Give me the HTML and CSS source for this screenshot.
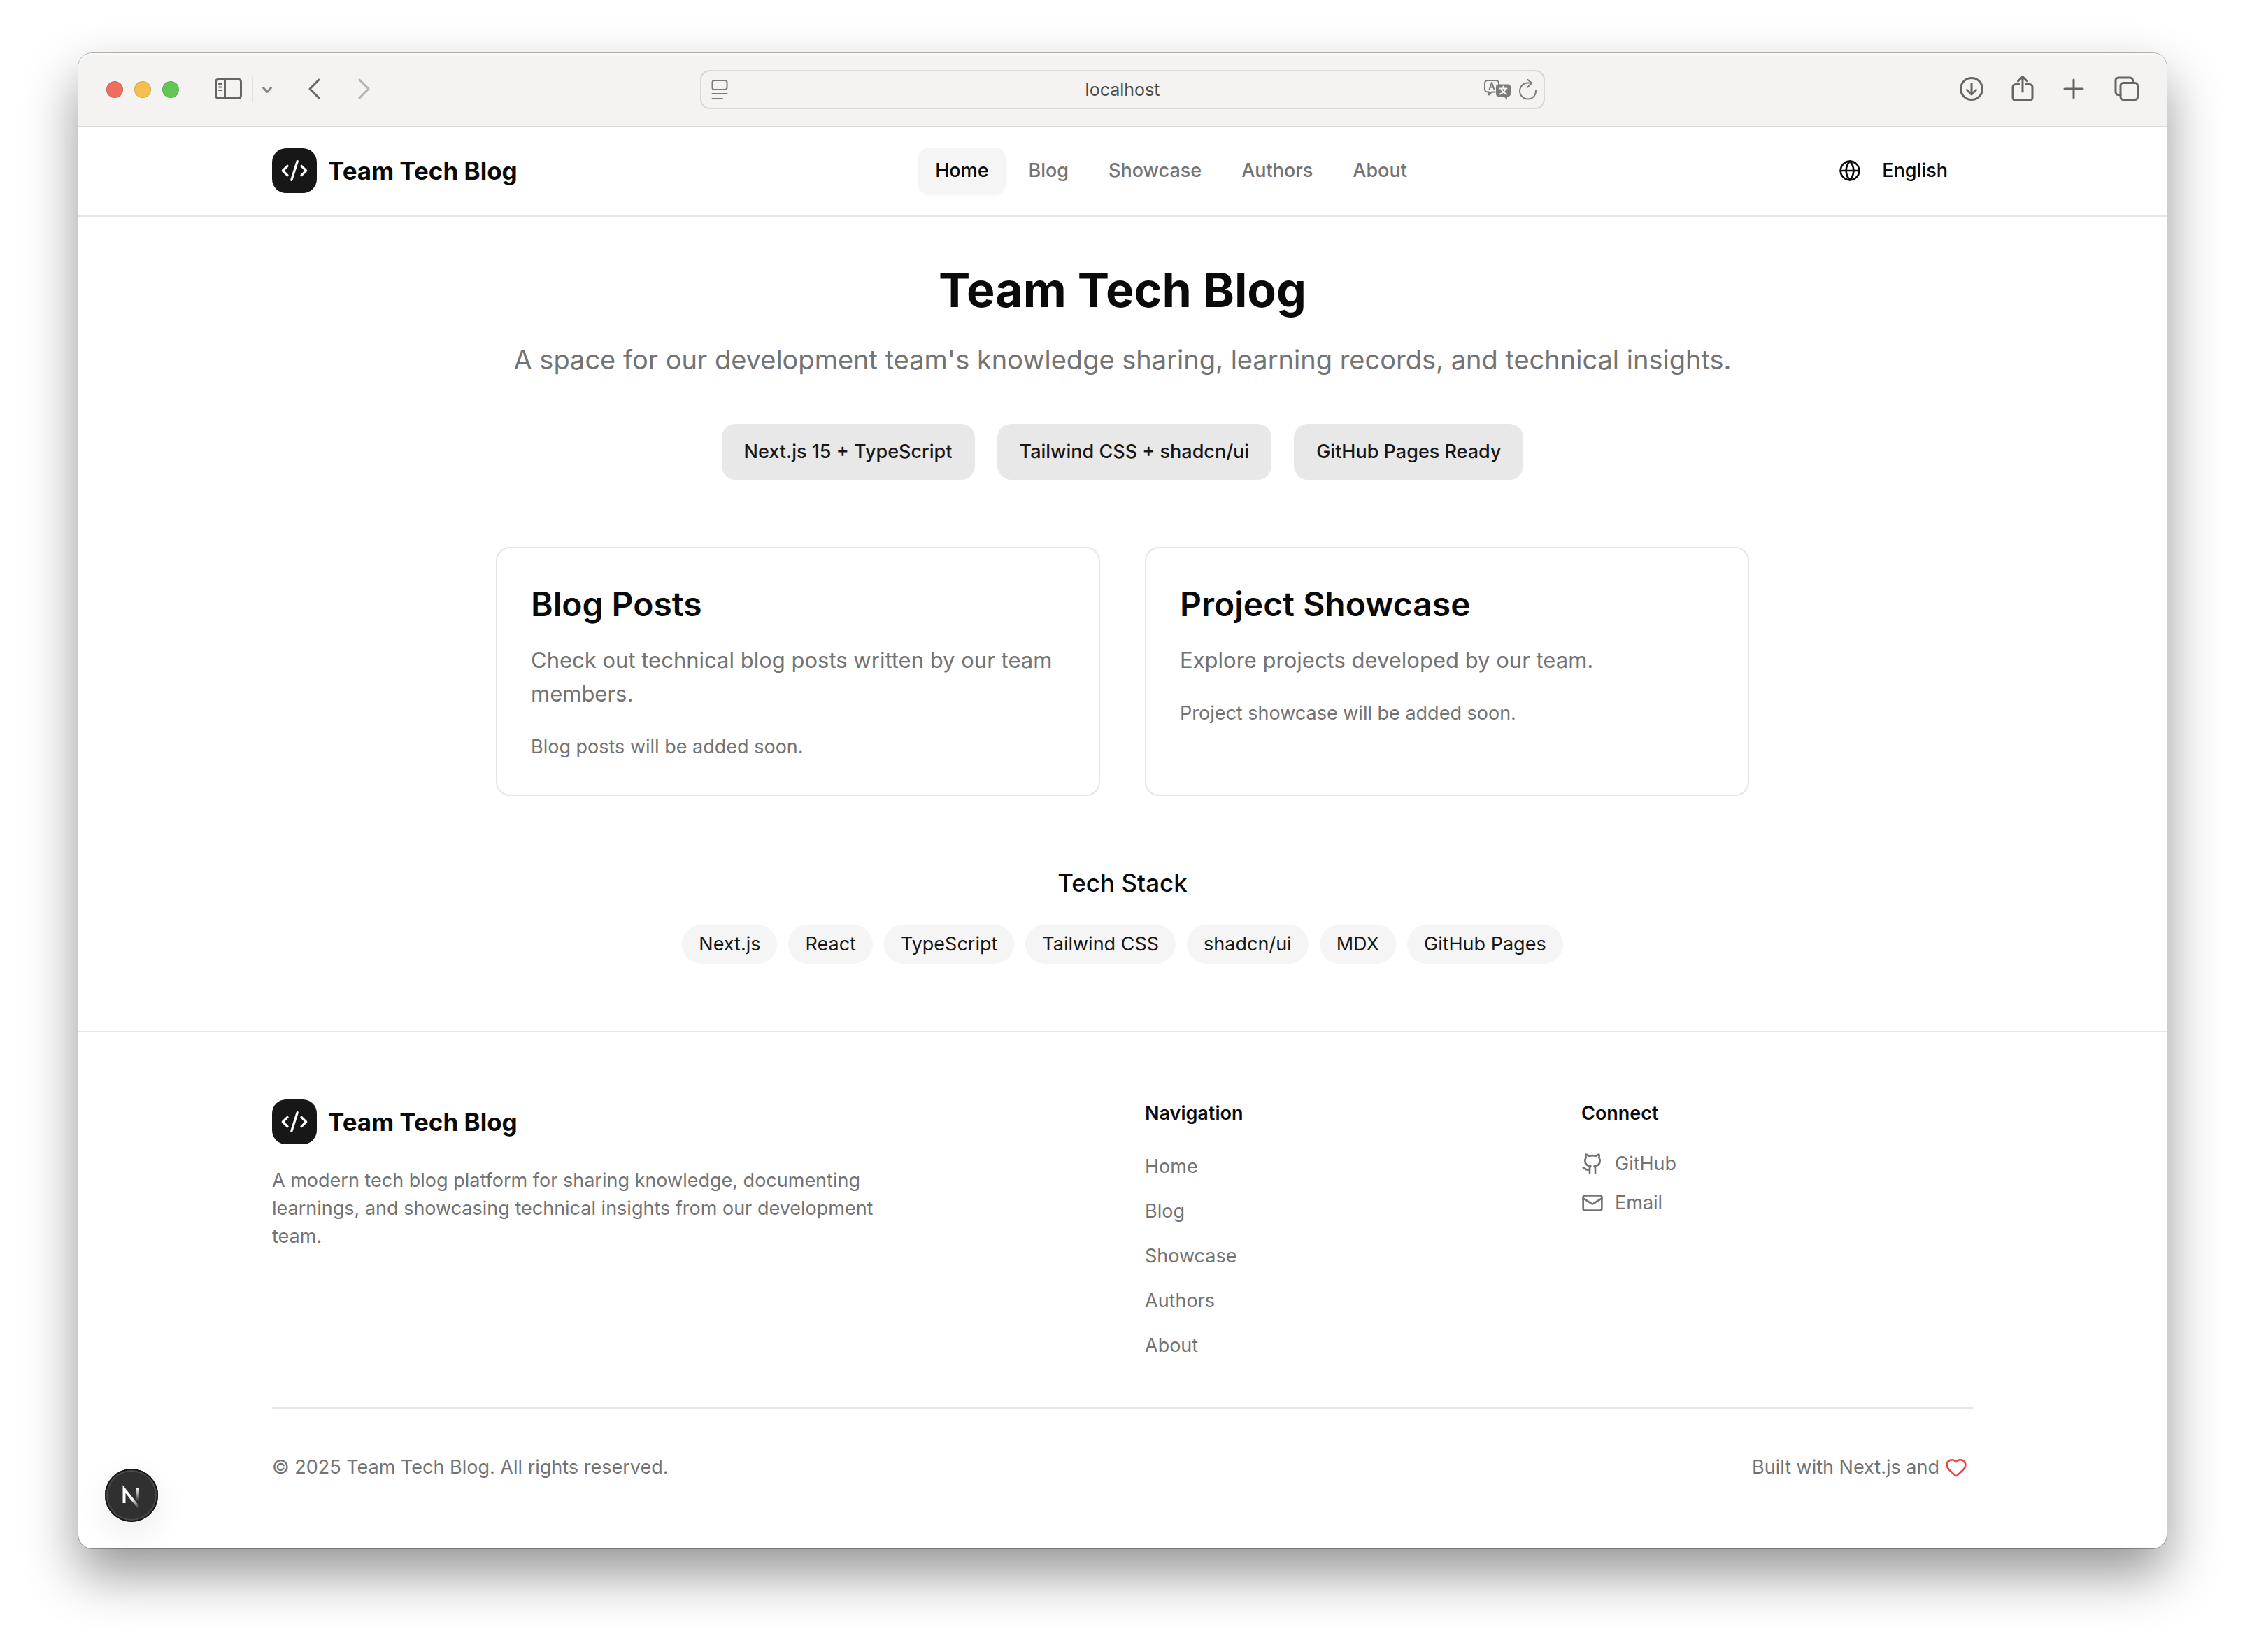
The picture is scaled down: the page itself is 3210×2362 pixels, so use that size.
FILE: index.html
```html
<!DOCTYPE html>
<html lang="en">
<head>
  <meta charset="utf-8">
  <meta name="viewport" content="width=device-width, initial-scale=1">
  <title>Team Tech Blog</title>
  <link rel="stylesheet" href="styles.css">
</head>
<body>
  <div class="window">
    <div class="toolbar">
      <div class="toolbar-left">
        <div class="lights">
          <span class="light light-close"></span>
          <span class="light light-minimize"></span>
          <span class="light light-zoom"></span>
        </div>
        <div class="sidebar-tools">
          <button class="tool" type="button" aria-label="Sidebar">
            <svg class="tool-icon" viewBox="0 0 40 40"><rect x="2.5" y="5" width="36" height="27.500" rx="4"/><path d="M15.500 5v27.500"/><path class="thin" d="M7 12h4M7 16.500h4M7 21h4"/></svg>
          </button>
          <span class="tool-divider"></span>
          <button class="tool tool-small" type="button" aria-label="Tab groups">
            <svg class="small-icon" viewBox="0 0 24 24"><path d="m6.500 9.500 5.500 6 5.500-6"/></svg>
          </button>
        </div>
        <div class="history">
          <button class="tool" type="button" aria-label="Back">
            <svg class="tool-icon" viewBox="0 0 40 40"><path d="M26 6 13 19l13 13"/></svg>
          </button>
          <button class="tool tool-disabled" type="button" aria-label="Forward">
            <svg class="tool-icon" viewBox="0 0 40 40"><path d="m14 6 13 13-13 13"/></svg>
          </button>
        </div>
      </div>
      <div class="address">
        <svg class="page-icon" viewBox="0 0 24 30"><rect x="1.500" y="2" width="21" height="13" rx="3"/><path d="M1.500 21h21M1.500 28H16"/></svg>
        <input class="address-input" type="text" value="localhost" aria-label="Address">
        <div class="address-tools">
          <button class="tool" type="button" aria-label="Translate">
            <svg class="translate-icon" viewBox="0 0 40 30">
              <path class="bubble-line" d="M17 18.500h-5l-4 4v-4H6a4 4 0 0 1-4-4V6a4 4 0 0 1 4-4h12a4 4 0 0 1 4 4v2"/>
              <path class="bubble-line" d="m8.500 15 3.500-10 3.500 10M9.800 11.500h4.500"/>
              <path class="bubble" d="M22 7.500h13a4 4 0 0 1 4 4V21a4 4 0 0 1-4 4h-1v4.500L29 25h-7a4 4 0 0 1-4-4v-9.500a4 4 0 0 1 4-4z"/>
              <path class="bubble-mark" d="M28.500 10.500v2.500M23.500 13.500h10M25.500 14c1 3.500 4 6 7.500 7.500M31.500 14c-1 3.500-4 6-7.500 7.500"/>
            </svg>
          </button>
          <button class="tool" type="button" aria-label="Reload">
            <svg class="reload-icon" viewBox="0 0 28 30"><path d="M25 16.500A11.500 11.500 0 1 1 13.500 5.500H19"/><path d="m13.500 1 5.500 4.500-5.500 6"/></svg>
          </button>
        </div>
      </div>
      <div class="toolbar-right">
        <button class="tool" type="button" aria-label="Downloads">
          <svg class="tool-icon" viewBox="0 0 40 40"><circle cx="20" cy="19" r="15.500"/><path d="M20 11.500v15M13.500 20.500l6.500 6.500 6.500-6.500"/></svg>
        </button>
        <button class="tool" type="button" aria-label="Share">
          <svg class="tool-icon" viewBox="0 0 40 40"><path d="M15 12.500H10a4 4 0 0 0-4 4V31.500a4 4 0 0 0 4 4h20a4 4 0 0 0 4-4V16.500a4 4 0 0 0-4-4h-5"/><path d="M20 23V2M13.500 8 20 1.500 26.500 8"/></svg>
        </button>
        <button class="tool" type="button" aria-label="New tab">
          <svg class="tool-icon" viewBox="0 0 40 40"><path d="M20 6v26M7 19h26"/></svg>
        </button>
        <button class="tool" type="button" aria-label="Tab overview">
          <svg class="tool-icon" viewBox="0 0 40 40"><rect x="14" y="10.500" width="24.500" height="24" rx="4"/><path d="M14 27.500H11a4 4 0 0 1-4-4V7a4 4 0 0 1 4-4h16.500a4 4 0 0 1 4 4v3.500"/></svg>
        </button>
      </div>
    </div>

    <header class="site-header">
      <div class="container header-row">
        <a class="brand" href="#">
          <span class="brand-mark">
            <svg class="brand-icon" viewBox="0 0 24 24"><path d="m18 16 4-4-4-4"/><path d="m6 8-4 4 4 4"/><path d="m14.500 4-5 16"/></svg>
          </span>
          <span class="brand-name">Team Tech Blog</span>
        </a>
        <nav class="main-nav" aria-label="Main">
          <a class="nav-link nav-link-active" href="#" aria-current="page">Home</a>
          <a class="nav-link" href="#">Blog</a>
          <a class="nav-link" href="#">Showcase</a>
          <a class="nav-link" href="#">Authors</a>
          <a class="nav-link" href="#">About</a>
        </nav>
        <button class="language" type="button">
          <svg class="icon" viewBox="0 0 24 24"><circle cx="12" cy="12" r="10"/><path d="M12 2a14.500 14.500 0 0 0 0 20 14.500 14.500 0 0 0 0-20"/><path d="M2 12h20"/></svg>
          <span>English</span>
        </button>
      </div>
    </header>

    <main class="main">
      <h1 class="title">Team Tech Blog</h1>
      <p class="subtitle">A space for our development team's knowledge sharing, learning records, and technical insights.</p>
      <div class="badges">
        <span class="badge">Next.js 15 + TypeScript</span>
        <span class="badge">Tailwind CSS + shadcn/ui</span>
        <span class="badge">GitHub Pages Ready</span>
      </div>
      <div class="cards">
        <section class="card">
          <h2 class="card-title">Blog Posts</h2>
          <p class="card-text">Check out technical blog posts written by our team members.</p>
          <p class="card-note">Blog posts will be added soon.</p>
        </section>
        <section class="card">
          <h2 class="card-title">Project Showcase</h2>
          <p class="card-text">Explore projects developed by our team.</p>
          <p class="card-note">Project showcase will be added soon.</p>
        </section>
      </div>
      <h3 class="stack-title">Tech Stack</h3>
      <ul class="stack">
        <li class="chip">Next.js</li>
        <li class="chip">React</li>
        <li class="chip">TypeScript</li>
        <li class="chip">Tailwind CSS</li>
        <li class="chip">shadcn/ui</li>
        <li class="chip">MDX</li>
        <li class="chip">GitHub Pages</li>
      </ul>
    </main>

    <footer class="site-footer">
      <div class="container">
        <div class="footer-grid">
          <div class="footer-about">
            <a class="brand" href="#">
              <span class="brand-mark">
                <svg class="brand-icon" viewBox="0 0 24 24"><path d="m18 16 4-4-4-4"/><path d="m6 8-4 4 4 4"/><path d="m14.500 4-5 16"/></svg>
              </span>
              <span class="brand-name">Team Tech Blog</span>
            </a>
            <p class="footer-text">A modern tech blog platform for sharing knowledge, documenting learnings, and showcasing technical insights from our development team.</p>
          </div>
          <nav class="footer-column" aria-label="Footer">
            <h3 class="footer-title">Navigation</h3>
            <ul class="footer-links">
              <li><a class="footer-link" href="#">Home</a></li>
              <li><a class="footer-link" href="#">Blog</a></li>
              <li><a class="footer-link" href="#">Showcase</a></li>
              <li><a class="footer-link" href="#">Authors</a></li>
              <li><a class="footer-link" href="#">About</a></li>
            </ul>
          </nav>
          <div class="footer-column">
            <h3 class="footer-title">Connect</h3>
            <div class="contact-links">
              <a class="contact-link" href="#">
                <svg class="icon" viewBox="0 0 24 24"><path d="M15 22v-4a4.800 4.800 0 0 0-1-3.500c3 0 6-2 6-5.500.080-1.250-.270-2.480-1-3.500.280-1.150.280-2.350 0-3.500 0 0-1 0-3 1.500-2.640-.500-5.360-.500-8 0C6 2 5 2 5 2c-.300 1.150-.300 2.350 0 3.500A5.403 5.403 0 0 0 4 9c0 3.500 3 5.500 6 5.500-.390.490-.680 1.050-.850 1.650-.170.600-.220 1.230-.150 1.850v4"/><path d="M9 18c-4.510 2-5-2-7-2"/></svg>
                <span>GitHub</span>
              </a>
              <a class="contact-link" href="#">
                <svg class="icon" viewBox="0 0 24 24"><path d="m22 7-8.991 5.727a2 2 0 0 1-2.009 0L2 7"/><rect x="2" y="4" width="20" height="16" rx="2"/></svg>
                <span>Email</span>
              </a>
            </div>
          </div>
        </div>
        <div class="footer-bottom">
          <p>© 2025 Team Tech Blog. All rights reserved.</p>
          <p class="built-with">Built with Next.js and
            <svg class="icon heart" viewBox="0 0 24 24"><path d="M2 9.500a5.500 5.500 0 0 1 9.591-3.676.560.560 0 0 0 .818 0A5.490 5.490 0 0 1 22 9.500c0 2.290-1.500 4-3 5.500l-5.492 5.313a2 2 0 0 1-3 .019L5 15c-1.500-1.500-3-3.200-3-5.500"/></svg>
          </p>
        </div>
      </div>
    </footer>

    <button class="dev-badge" type="button" aria-label="Open Next.js Dev Tools">
      <svg class="dev-icon" viewBox="0 0 76 76">
        <defs>
          <linearGradient id="diagonal-fade" gradientUnits="userSpaceOnUse" x1="40" y1="42" x2="50" y2="55"><stop offset="0" stop-color="#fff"/><stop offset="1" stop-color="#fff" stop-opacity="0"/></linearGradient>
          <linearGradient id="stem-fade" gradientUnits="userSpaceOnUse" x1="0" y1="27" x2="0" y2="46"><stop offset="0" stop-color="#fff"/><stop offset="1" stop-color="#fff" stop-opacity="0"/></linearGradient>
        </defs>
        <path d="M27.500 49V29L48 55" stroke="url(#diagonal-fade)"/>
        <path d="M47 27v22" stroke="url(#stem-fade)"/>
      </svg>
    </button>
  </div>
</body>
</html>
```
FILE: styles.css
```css
:root {
  --ink: #0a0a0a;
  --ink-soft: #171717;
  --muted: #737373;
  --line: #e5e5e5;
  --chrome: #f4f3f1;
  --chrome-icon: #666563;
  --text-small: 27px;
}

*,
*::before,
*::after {
  box-sizing: border-box;
}

body {
  margin: 0;
  padding: 76px 112px 148px;
  background: #fff;
  color: var(--ink);
  font-family: Inter, "Liberation Sans", sans-serif;
  font-size: var(--text-small);
  line-height: 40px;
}

h1, h2, h3, p, ul {
  margin: 0;
  padding: 0;
}

ul {
  list-style: none;
}

a {
  color: inherit;
  text-decoration: none;
}

button {
  padding: 0;
  border: 0;
  background: none;
  color: inherit;
  font: inherit;
}

svg {
  display: block;
  flex: none;
  fill: none;
  stroke: currentColor;
  stroke-width: 2;
  stroke-linecap: round;
  stroke-linejoin: round;
}

/* Browser window */

.window {
  position: relative;
  border-radius: 20px;
  background: #fff;
  box-shadow: 0 0 0 1px rgba(0, 0, 0, 0.28), 0 36px 76px rgba(0, 0, 0, 0.42);
}

.toolbar {
  display: grid;
  grid-template-columns: 1fr minmax(0, 1208px) 1fr;
  align-items: center;
  height: 104px;
  padding: 0 40px;
  border-radius: 20px 20px 0 0;
  background: var(--chrome);
  box-shadow: inset 0 2px #fbfaf9, 0 1px #d9d9d8;
  color: var(--chrome-icon);
}

.toolbar-left,
.lights,
.sidebar-tools,
.history,
.address,
.address-tools,
.toolbar-right {
  display: flex;
  align-items: center;
}

.lights {
  gap: 16px;
  margin-right: 50px;
}

.light {
  width: 24px;
  height: 24px;
  border: 1px solid rgba(0, 0, 0, 0.12);
  border-radius: 50%;
}

.light-close { background: #ed6e5f; }
.light-minimize { background: #f5bf4f; }
.light-zoom { background: #63c654; }

.sidebar-tools {
  margin-right: 36px;
}

.tool-divider {
  width: 2px;
  height: 36px;
  margin: 0 8px 0 14px;
  background: #e2e1df;
}

.history {
  gap: 30px;
}

.tool-icon {
  width: 40px;
  height: 40px;
  stroke-width: 3;
}

.tool-icon .thin {
  stroke-width: 2;
}

.small-icon {
  width: 24px;
  height: 24px;
  stroke-width: 3;
}

.tool-small {
  color: #838286;
}

.tool-disabled {
  color: #b4b3b2;
}

.address {
  height: 56px;
  padding: 0 8px 0 14px;
  border: 2px solid #d7d7d5;
  border-radius: 14px;
  color: #7b7b7a;
}

.page-icon {
  width: 24px;
  height: 30px;
  margin-right: 48px;
}

.address-input {
  flex: 1;
  min-width: 0;
  padding: 0;
  border: 0;
  background: none;
  color: #4b4b4a;
  font: inherit;
  font-size: 25px;
  text-align: center;
}

.address-tools {
  gap: 10px;
}

.translate-icon {
  width: 40px;
  height: 30px;
}

.bubble {
  fill: currentColor;
  stroke: none;
}

.bubble-mark {
  stroke: var(--chrome);
}

.reload-icon {
  width: 28px;
  height: 30px;
}

.toolbar-right {
  justify-content: flex-end;
  gap: 33px;
}

/* Site header */

.container {
  max-width: 2560px;
  margin: 0 auto;
  padding: 0 64px;
}

.site-header {
  border-bottom: 2px solid var(--line);
}

.header-row {
  display: flex;
  align-items: center;
  justify-content: space-between;
  height: 128px;
}

.brand {
  display: flex;
  align-items: center;
  gap: 16px;
}

.brand-mark {
  display: grid;
  place-items: center;
  width: 64px;
  height: 64px;
  border-radius: 20px;
  background: var(--ink-soft);
  color: #fff;
}

.brand-icon {
  width: 40px;
  height: 40px;
}

.brand-name {
  font-size: 35px;
  font-weight: 700;
}

.main-nav {
  display: flex;
  gap: 9px;
}

.nav-link {
  padding: 13px 24px;
  border-radius: 16px;
  color: var(--muted);
  font-weight: 500;
}

.nav-link-active {
  background: #f5f5f5;
  box-shadow: 0 2px 4px rgba(0, 0, 0, 0.05);
  color: var(--ink);
}

.icon {
  width: 32px;
  height: 32px;
}

.language {
  display: flex;
  align-items: center;
  gap: 30px;
  padding: 0 36px 0 20px;
  font-weight: 500;
}

/* Home page */

.main {
  padding: 64px 64px 96px;
  text-align: center;
}

.title {
  margin-bottom: 32px;
  font-size: 68px;
  font-weight: 700;
  line-height: 80px;
}

.subtitle {
  margin-bottom: 64px;
  color: var(--muted);
  font-size: 38px;
  line-height: 56px;
}

.badges {
  display: flex;
  flex-wrap: wrap;
  justify-content: center;
  gap: 32px;
  margin-bottom: 96px;
}

.badge {
  padding: 20px 32px;
  border-radius: 20px;
  background: #e8e8e8;
  color: var(--ink-soft);
  font-weight: 500;
}

.cards {
  display: grid;
  grid-template-columns: 1fr 1fr;
  gap: 64px;
  max-width: 1792px;
  margin: 0 auto 96px;
  text-align: left;
}

.card {
  padding: 48px;
  border: 2px solid var(--line);
  border-radius: 20px;
}

.card-title {
  margin-bottom: 24px;
  font-size: 48px;
  font-weight: 600;
  line-height: 64px;
}

.card-text {
  margin-bottom: 32px;
  color: var(--muted);
  font-size: 31px;
  line-height: 48px;
}

.card-note {
  color: var(--muted);
}

.stack-title {
  margin-bottom: 32px;
  font-size: 35px;
  font-weight: 500;
  line-height: 56px;
}

.stack {
  display: flex;
  flex-wrap: wrap;
  justify-content: center;
  gap: 16px;
}

.chip {
  padding: 8px 24px;
  border-radius: 28px;
  background: #f5f5f5;
  color: var(--ink-soft);
}

/* Site footer */

.site-footer {
  padding: 96px 0;
  border-top: 2px solid var(--line);
  color: var(--muted);
}

.footer-grid {
  display: grid;
  grid-template-columns: repeat(4, 1fr);
  gap: 64px;
  margin-bottom: 64px;
}

.footer-about {
  grid-column: span 2;
}

.footer-about .brand {
  margin-bottom: 32px;
  color: var(--ink);
}

.footer-text {
  max-width: 896px;
}

.footer-title {
  margin-bottom: 32px;
  color: var(--ink);
  font-size: var(--text-small);
  font-weight: 600;
}

.footer-links,
.contact-links {
  display: flex;
  flex-direction: column;
  gap: 16px;
}

.footer-links {
  line-height: 48px;
}

.contact-link {
  display: flex;
  align-items: center;
  gap: 16px;
}

.footer-bottom {
  display: flex;
  justify-content: space-between;
  padding-top: 64px;
  border-top: 2px solid var(--line);
}

.built-with {
  display: flex;
  align-items: center;
}

.heart {
  margin: 0 8px;
  color: #ef4444;
}

/* Floating dev tools button */

.dev-badge {
  position: absolute;
  left: 38px;
  bottom: 38px;
  border-radius: 50%;
  background: #303030;
  box-shadow: inset 0 0 0 2px #171717, inset 0 0 0 4px #4a4a4a, 0 16px 48px rgba(0, 0, 0, 0.08);
}

.dev-icon {
  width: 76px;
  height: 76px;
  stroke-width: 4;
  stroke-linecap: butt;
  stroke-linejoin: miter;
}
```
